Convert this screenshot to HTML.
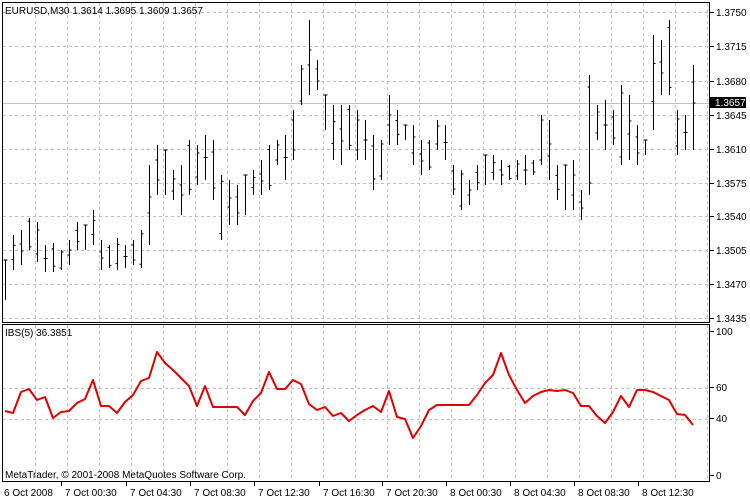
<!DOCTYPE html>
<html><head><meta charset="utf-8"><style>
body{margin:0;background:#fff;width:750px;height:500px;overflow:hidden}
svg{display:block;font-family:"Liberation Sans",sans-serif;font-size:10px}
</style></head><body>
<svg id="s" width="750" height="500" xmlns="http://www.w3.org/2000/svg">
<rect width="750" height="500" fill="#fff"/>
<g id="grid" stroke="#c0c0c0" stroke-dasharray="3,3" stroke-width="1"></g>
<line x1="2" y1="103.5" x2="710" y2="103.5" stroke="#c0c0c0"/>
<g id="bars" stroke="#000" stroke-width="1"></g>
<polyline id="ibs" fill="none" stroke="#e00000" stroke-width="2" stroke-linejoin="round"/>
<rect x="2.5" y="2.5" width="707" height="320" fill="none" stroke="#000"/>
<rect x="2.5" y="324.5" width="707" height="157" fill="none" stroke="#000"/>
<g id="lab" fill="#000"></g>
<text x="5" y="14">EURUSD,M30  1.3614 1.3695 1.3609 1.3657</text>
<text x="5" y="336">IBS(5) 36.3851</text>
<text x="5" y="478">MetaTrader, © 2001-2008 MetaQuotes Software Corp.</text>
<rect x="710" y="97" width="36" height="11" fill="#000"/>
<text x="715" y="106" fill="#fff">1.3657</text>
</svg>
<script>
var NS="http://www.w3.org/2000/svg";
function el(p,t,a,txt){var e=document.createElementNS(NS,t);for(var k in a)e.setAttribute(k,a[k]);if(txt)e.textContent=txt;document.getElementById(p).appendChild(e);return e;}
for(var x=35;x<710;x+=32)el("grid","line",{x1:x+.5,y1:3,x2:x+.5,y2:322});
for(var x=35;x<710;x+=32)el("grid","line",{x1:x+.5,y1:325,x2:x+.5,y2:481});
var py=[12,46,81,115,149,183,216,250,284,318],pl=["1.3750","1.3715","1.3680","1.3645","1.3610","1.3575","1.3540","1.3505","1.3470","1.3435"];
for(var i=0;i<py.length;i++){el("grid","line",{x1:3,y1:py[i]+.5,x2:709,y2:py[i]+.5});
 if(i!=2&&i!=3||true){el("lab","line",{x1:710,y1:py[i]+.5,x2:714,y2:py[i]+.5,stroke:"#000"});el("lab","text",{x:716,y:py[i]+4},pl[i]);}}
el("grid","line",{x1:3,y1:388.5,x2:709,y2:388.5});el("grid","line",{x1:3,y1:419.5,x2:709,y2:419.5});
[[331,"100"],[387,"60"],[418,"40"],[475,"0"]].forEach(function(a){el("lab","line",{x1:710,y1:a[0]+.5,x2:714,y2:a[0]+.5,stroke:"#000"});el("lab","text",{x:716,y:a[0]+4},a[1]);});
var tl=[[4,"6 Oct 2008"],[65,"7 Oct 00:30"],[130,"7 Oct 04:30"],[194,"7 Oct 08:30"],[258,"7 Oct 12:30"],[323,"7 Oct 16:30"],[386,"7 Oct 20:30"],[450,"8 Oct 00:30"],[514,"8 Oct 04:30"],[578,"8 Oct 08:30"],[642,"8 Oct 12:30"]];
tl.forEach(function(a,i){if(i>0)el("lab","line",{x1:a[0]-3.5,y1:482,x2:a[0]-3.5,y2:486,stroke:"#000"});el("lab","text",{x:a[0],y:496},a[1]);});
var B=[[260,300],[235,270],[230,265],[218,250],[222,262],[245,272],[243,272],[250,270],[240,265],[222,250],[225,250],[210,245],[240,270],[245,268],[238,270],[245,268],[240,265],[230,268],[165,245],[145,195],[150,195],[170,200],[165,215],[140,195],[145,185],[135,180],[140,200],[175,240],[180,225],[185,225],[175,215],[170,195],[160,195],[145,190],[140,165],[135,180],[110,160],[65,105],[20,95],[60,90],[95,130],[105,160],[105,165],[105,150],[110,160],[120,160],[135,190],[140,180],[95,145],[110,145],[125,140],[125,165],[140,175],[140,170],[120,150],[125,160],[165,195],[170,210],[180,205],[165,190],[155,185],[155,180],[160,185],[165,180],[160,180],[155,185],[160,175],[115,165],[120,180],[165,200],[165,210],[160,210],[190,220],[75,195],[105,140],[100,150],[110,145],[85,165],[95,160],[125,165],[140,155],[35,130],[40,95],[20,95],[110,155],[115,150],[65,150]];
for(var i=0;i<B.length;i++){var x=5+8*i+.5,h=B[i][0],l=B[i][1],r=l-h;
 var o=h+r*((i*37%10)/10),c=h+r*((i*53%10)/10);if(i==B.length-1)c=103;
 el("bars","line",{x1:x,y1:h,x2:x,y2:l});el("bars","line",{x1:x-2,y1:o,x2:x,y2:o});el("bars","line",{x1:x,y1:c,x2:x+2,y2:c});}
var I=[411,413,392,389,400,397,418,412,411,403,399,380,406,406,413,402,395,381,378,352,363,370,378,386,406,386,407,407,407,407,415,401,393,372,389,389,380,384,404,410,407,416,413,421,415,410,406,412,391,417,419,438,426,410,405,405,405,405,405,395,383,375,353,375,390,403,396,392,390,391,390,393,406,406,416,423,412,396,407,390,390,392,396,400,414,415,425];
document.getElementById("ibs").setAttribute("points",I.map(function(y,i){return(5+8*i)+","+y;}).join(" "));
</script>
</body></html>
